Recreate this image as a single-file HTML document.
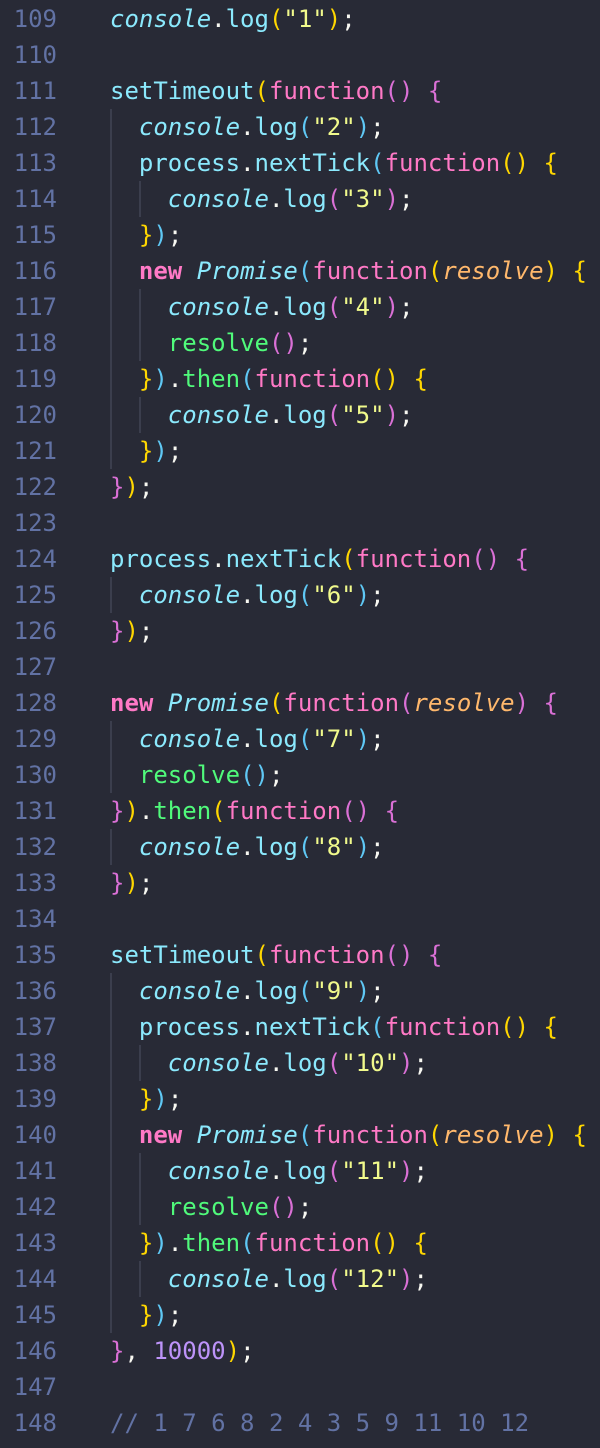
<!DOCTYPE html>
<html><head><meta charset="utf-8"><style>
html,body{margin:0;padding:0;background:#282a36;}
body{width:600px;height:1448px;position:relative;overflow:hidden;font-family:"DejaVu Sans Mono","Liberation Mono",monospace;font-size:24px;}
#w{position:absolute;left:0;top:-2px;width:600px;height:1450px;}
.l{position:absolute;left:0;height:36px;line-height:36px;white-space:pre;width:600px;}
.ln{position:absolute;left:0;width:57px;text-align:right;color:#6272a4;}
.t{position:absolute;left:110px;color:#f8f8f2;}
.g{color:#ffd700}.p{color:#da70d6}.b{color:#5fc8f5}
.k{color:#ff79c6}.kb{color:#ff79c6;font-weight:bold}
.c{color:#8be9fd}.i{font-style:italic}
.s{color:#f1fa8c}.n{color:#bd93f9}.o{color:#ffb86c;font-style:italic}
.gr{color:#50fa7b}.cm{color:#6272a4}
.guide{position:absolute;width:2px;background:#3b3e4d;}
</style></head><body><div id="w">
<div class="guide" style="left:110px;top:111px;height:360px"></div>
<div class="guide" style="left:139px;top:183px;height:36px"></div>
<div class="guide" style="left:139px;top:291px;height:72px"></div>
<div class="guide" style="left:139px;top:399px;height:36px"></div>
<div class="guide" style="left:110px;top:579px;height:36px"></div>
<div class="guide" style="left:110px;top:723px;height:72px"></div>
<div class="guide" style="left:110px;top:831px;height:36px"></div>
<div class="guide" style="left:110px;top:975px;height:360px"></div>
<div class="guide" style="left:139px;top:1047px;height:36px"></div>
<div class="guide" style="left:139px;top:1155px;height:72px"></div>
<div class="guide" style="left:139px;top:1263px;height:36px"></div>

<div class="l" style="top:3px"><span class="ln">109</span><span class="t"><span class="c i">console</span>.<span class="c">log</span><span class="g">(</span><span class="s">"1"</span><span class="g">)</span>;</span></div>
<div class="l" style="top:39px"><span class="ln">110</span></div>
<div class="l" style="top:75px"><span class="ln">111</span><span class="t"><span class="c">setTimeout</span><span class="g">(</span><span class="k">function</span><span class="p">()</span> <span class="p">{</span></span></div>
<div class="l" style="top:111px"><span class="ln">112</span><span class="t">  <span class="c i">console</span>.<span class="c">log</span><span class="b">(</span><span class="s">"2"</span><span class="b">)</span>;</span></div>
<div class="l" style="top:147px"><span class="ln">113</span><span class="t">  <span class="c">process</span>.<span class="c">nextTick</span><span class="b">(</span><span class="k">function</span><span class="g">()</span> <span class="g">{</span></span></div>
<div class="l" style="top:183px"><span class="ln">114</span><span class="t">    <span class="c i">console</span>.<span class="c">log</span><span class="p">(</span><span class="s">"3"</span><span class="p">)</span>;</span></div>
<div class="l" style="top:219px"><span class="ln">115</span><span class="t">  <span class="g">}</span><span class="b">)</span>;</span></div>
<div class="l" style="top:255px"><span class="ln">116</span><span class="t">  <span class="kb">new</span> <span class="c i">Promise</span><span class="b">(</span><span class="k">function</span><span class="g">(</span><span class="o">resolve</span><span class="g">)</span> <span class="g">{</span></span></div>
<div class="l" style="top:291px"><span class="ln">117</span><span class="t">    <span class="c i">console</span>.<span class="c">log</span><span class="p">(</span><span class="s">"4"</span><span class="p">)</span>;</span></div>
<div class="l" style="top:327px"><span class="ln">118</span><span class="t">    <span class="gr">resolve</span><span class="p">()</span>;</span></div>
<div class="l" style="top:363px"><span class="ln">119</span><span class="t">  <span class="g">}</span><span class="b">)</span>.<span class="gr">then</span><span class="b">(</span><span class="k">function</span><span class="g">()</span> <span class="g">{</span></span></div>
<div class="l" style="top:399px"><span class="ln">120</span><span class="t">    <span class="c i">console</span>.<span class="c">log</span><span class="p">(</span><span class="s">"5"</span><span class="p">)</span>;</span></div>
<div class="l" style="top:435px"><span class="ln">121</span><span class="t">  <span class="g">}</span><span class="b">)</span>;</span></div>
<div class="l" style="top:471px"><span class="ln">122</span><span class="t"><span class="p">}</span><span class="g">)</span>;</span></div>
<div class="l" style="top:507px"><span class="ln">123</span></div>
<div class="l" style="top:543px"><span class="ln">124</span><span class="t"><span class="c">process</span>.<span class="c">nextTick</span><span class="g">(</span><span class="k">function</span><span class="p">()</span> <span class="p">{</span></span></div>
<div class="l" style="top:579px"><span class="ln">125</span><span class="t">  <span class="c i">console</span>.<span class="c">log</span><span class="b">(</span><span class="s">"6"</span><span class="b">)</span>;</span></div>
<div class="l" style="top:615px"><span class="ln">126</span><span class="t"><span class="p">}</span><span class="g">)</span>;</span></div>
<div class="l" style="top:651px"><span class="ln">127</span></div>
<div class="l" style="top:687px"><span class="ln">128</span><span class="t"><span class="kb">new</span> <span class="c i">Promise</span><span class="g">(</span><span class="k">function</span><span class="p">(</span><span class="o">resolve</span><span class="p">)</span> <span class="p">{</span></span></div>
<div class="l" style="top:723px"><span class="ln">129</span><span class="t">  <span class="c i">console</span>.<span class="c">log</span><span class="b">(</span><span class="s">"7"</span><span class="b">)</span>;</span></div>
<div class="l" style="top:759px"><span class="ln">130</span><span class="t">  <span class="gr">resolve</span><span class="b">()</span>;</span></div>
<div class="l" style="top:795px"><span class="ln">131</span><span class="t"><span class="p">}</span><span class="g">)</span>.<span class="gr">then</span><span class="g">(</span><span class="k">function</span><span class="p">()</span> <span class="p">{</span></span></div>
<div class="l" style="top:831px"><span class="ln">132</span><span class="t">  <span class="c i">console</span>.<span class="c">log</span><span class="b">(</span><span class="s">"8"</span><span class="b">)</span>;</span></div>
<div class="l" style="top:867px"><span class="ln">133</span><span class="t"><span class="p">}</span><span class="g">)</span>;</span></div>
<div class="l" style="top:903px"><span class="ln">134</span></div>
<div class="l" style="top:939px"><span class="ln">135</span><span class="t"><span class="c">setTimeout</span><span class="g">(</span><span class="k">function</span><span class="p">()</span> <span class="p">{</span></span></div>
<div class="l" style="top:975px"><span class="ln">136</span><span class="t">  <span class="c i">console</span>.<span class="c">log</span><span class="b">(</span><span class="s">"9"</span><span class="b">)</span>;</span></div>
<div class="l" style="top:1011px"><span class="ln">137</span><span class="t">  <span class="c">process</span>.<span class="c">nextTick</span><span class="b">(</span><span class="k">function</span><span class="g">()</span> <span class="g">{</span></span></div>
<div class="l" style="top:1047px"><span class="ln">138</span><span class="t">    <span class="c i">console</span>.<span class="c">log</span><span class="p">(</span><span class="s">"10"</span><span class="p">)</span>;</span></div>
<div class="l" style="top:1083px"><span class="ln">139</span><span class="t">  <span class="g">}</span><span class="b">)</span>;</span></div>
<div class="l" style="top:1119px"><span class="ln">140</span><span class="t">  <span class="kb">new</span> <span class="c i">Promise</span><span class="b">(</span><span class="k">function</span><span class="g">(</span><span class="o">resolve</span><span class="g">)</span> <span class="g">{</span></span></div>
<div class="l" style="top:1155px"><span class="ln">141</span><span class="t">    <span class="c i">console</span>.<span class="c">log</span><span class="p">(</span><span class="s">"11"</span><span class="p">)</span>;</span></div>
<div class="l" style="top:1191px"><span class="ln">142</span><span class="t">    <span class="gr">resolve</span><span class="p">()</span>;</span></div>
<div class="l" style="top:1227px"><span class="ln">143</span><span class="t">  <span class="g">}</span><span class="b">)</span>.<span class="gr">then</span><span class="b">(</span><span class="k">function</span><span class="g">()</span> <span class="g">{</span></span></div>
<div class="l" style="top:1263px"><span class="ln">144</span><span class="t">    <span class="c i">console</span>.<span class="c">log</span><span class="p">(</span><span class="s">"12"</span><span class="p">)</span>;</span></div>
<div class="l" style="top:1299px"><span class="ln">145</span><span class="t">  <span class="g">}</span><span class="b">)</span>;</span></div>
<div class="l" style="top:1335px"><span class="ln">146</span><span class="t"><span class="p">}</span>, <span class="n">10000</span><span class="g">)</span>;</span></div>
<div class="l" style="top:1371px"><span class="ln">147</span></div>
<div class="l" style="top:1407px"><span class="ln">148</span><span class="t cm">// 1 7 6 8 2 4 3 5 9 11 10 12</span></div>
</div></body></html>
